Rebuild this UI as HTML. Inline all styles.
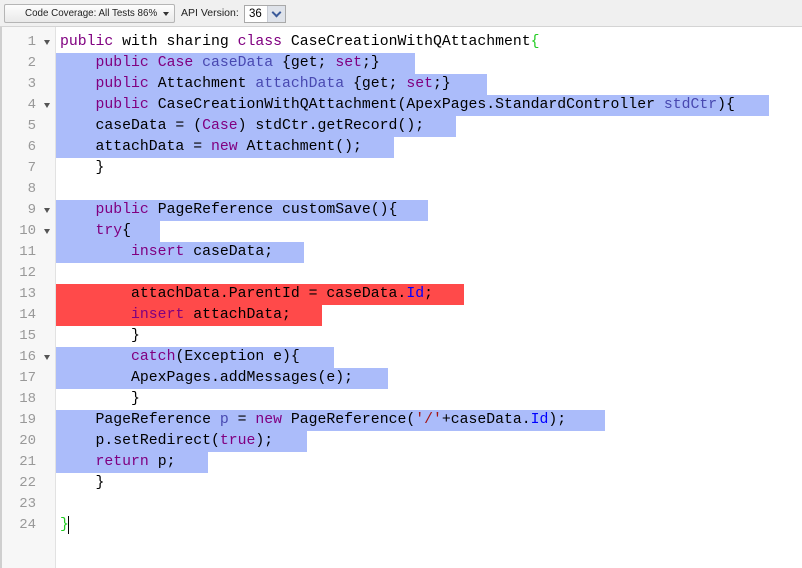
<!DOCTYPE html>
<html><head><meta charset="utf-8"><style>
*{margin:0;padding:0;box-sizing:border-box}
body{width:802px;height:568px;overflow:hidden;background:#fff;font-family:"Liberation Sans",sans-serif;position:relative}
#tb{position:absolute;left:0;top:0;width:802px;height:27px;background:#f0f0f0;border-bottom:1px solid #d4d4d4}
#btn{position:absolute;left:4px;top:4px;width:171px;height:19px;border:1px solid #b5b5b5;border-radius:2px;background:linear-gradient(#fdfdfd,#e9e9e9);font-size:9.8px;color:#222;line-height:17px;padding-left:20px;white-space:nowrap}
#btn .a{position:absolute;right:5px;top:7px;border-left:3px solid transparent;border-right:3px solid transparent;border-top:4px solid #333}
#lbl{position:absolute;left:181px;top:5px;font-size:10.5px;color:#222;line-height:17px}
#sel{position:absolute;left:244px;top:5px;width:42px;height:18px;border:1px solid #a9a9a9;background:#fff;font-size:11.5px;line-height:16px;padding-left:4px;color:#000}
#sel .b{position:absolute;right:0;top:0;width:18px;height:16px;background:#dfe3ea;border-left:1px solid #c8ccd4}
#sel .b:after{content:"";position:absolute;left:5px;top:3px;width:5px;height:5px;border-right:2px solid #3a5a9a;border-bottom:2px solid #3a5a9a;transform:rotate(45deg)}
#gut{position:absolute;left:0;top:27px;width:56px;height:541px;background:#f7f7f7;border-left:2px solid #cfcfcf;border-right:1px solid #e2e2e2}
.hl{position:absolute;left:56px;height:21px;background:#abbcfa}
.rd{background:#ff4a4a}
.ln{position:absolute;left:0;width:36px;text-align:right;font-family:"Liberation Mono",monospace;font-size:14px;color:#999;line-height:21px}
.fd{position:absolute;left:44px;width:0;height:0;border-left:3px solid transparent;border-right:3px solid transparent;border-top:5px solid #555}
.code{position:absolute;left:60px;font-family:"Liberation Mono",monospace;font-size:14.8px;line-height:21px;white-space:pre;color:#000}
.k{color:#800080}.v{color:#4848b0}.i{color:#0000ff}.s{color:#a31515}.g{color:#22cc22}
#cur{position:absolute;left:68px;top:516px;width:1px;height:18px;background:#000}
</style></head><body>
<div id="tb"><div id="btn">Code Coverage: All Tests 86%<span class="a"></span></div>
<div id="lbl">API Version:</div><div id="sel">36<span class="b"></span></div></div>
<div id="gut"></div>
<div class="hl" style="top:53px;width:359px"></div>
<div class="hl" style="top:74px;width:431px"></div>
<div class="hl" style="top:95px;width:713px"></div>
<div class="hl" style="top:116px;width:400px"></div>
<div class="hl" style="top:137px;width:338px"></div>
<div class="hl" style="top:200px;width:372px"></div>
<div class="hl" style="top:221px;width:104px"></div>
<div class="hl" style="top:242px;width:248px"></div>
<div class="hl rd" style="top:284px;width:408px"></div>
<div class="hl rd" style="top:305px;width:266px"></div>
<div class="hl" style="top:347px;width:278px"></div>
<div class="hl" style="top:368px;width:332px"></div>
<div class="hl" style="top:410px;width:549px"></div>
<div class="hl" style="top:431px;width:251px"></div>
<div class="hl" style="top:452px;width:152px"></div>

<div class="ln" style="top:32px">1<br>2<br>3<br>4<br>5<br>6<br>7<br>8<br>9<br>10<br>11<br>12<br>13<br>14<br>15<br>16<br>17<br>18<br>19<br>20<br>21<br>22<br>23<br>24</div>
<div class="fd" style="top:40px"></div><div class="fd" style="top:103px"></div><div class="fd" style="top:208px"></div><div class="fd" style="top:229px"></div><div class="fd" style="top:355px"></div>

<div class="code" style="top:32px"><span class="k">public</span> with sharing <span class="k">class</span> CaseCreationWithQAttachment<span class="g">{</span>
    <span class="k">public</span> <span class="k">Case</span> <span class="v">caseData</span> {get; <span class="k">set</span>;}
    <span class="k">public</span> Attachment <span class="v">attachData</span> {get; <span class="k">set</span>;}
    <span class="k">public</span> CaseCreationWithQAttachment(ApexPages.StandardController <span class="v">stdCtr</span>){
    caseData = (<span class="k">Case</span>) stdCtr.getRecord();
    attachData = <span class="k">new</span> Attachment();
    }

    <span class="k">public</span> PageReference customSave(){
    <span class="k">try</span>{
        <span class="k">insert</span> caseData;

        attachData.ParentId = caseData.<span class="i">Id</span>;
        <span class="k">insert</span> attachData;
        }
        <span class="k">catch</span>(Exception e){
        ApexPages.addMessages(e);
        }
    PageReference <span class="v">p</span> = <span class="k">new</span> PageReference(<span class="s">'/'</span>+caseData.<span class="i">Id</span>);
    p.setRedirect(<span class="k">true</span>);
    <span class="k">return</span> p;
    }

<span class="g">}</span></div>
<div id="cur"></div>
</body></html>
